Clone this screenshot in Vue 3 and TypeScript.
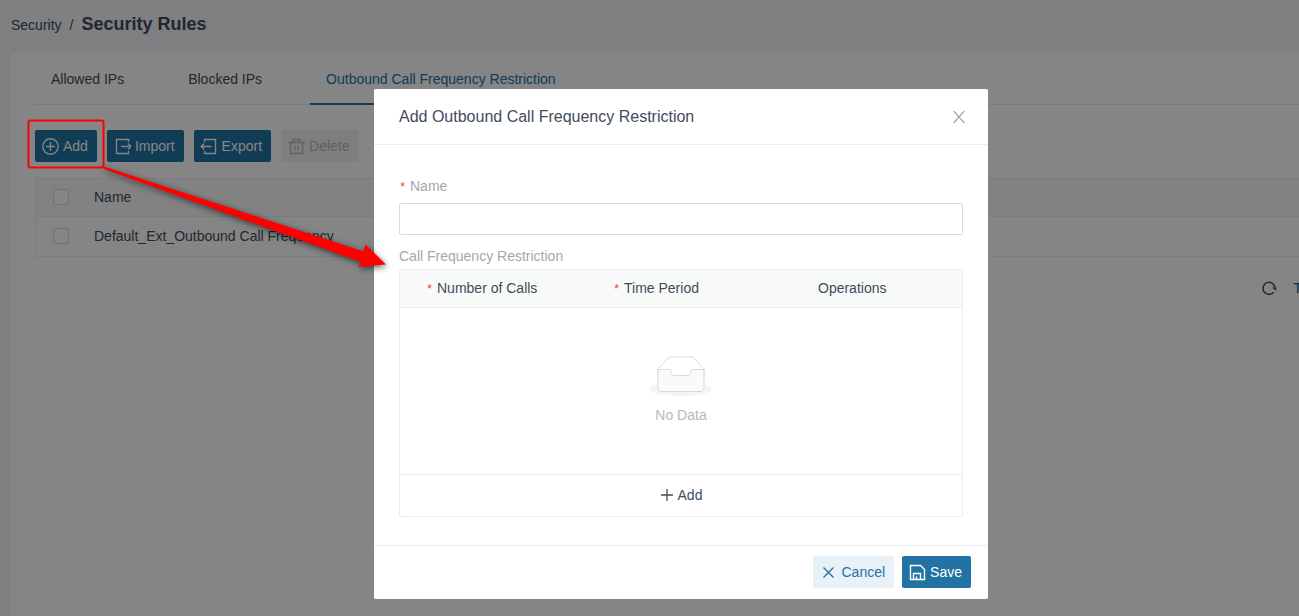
<script setup lang="ts">
import { ref } from 'vue'

interface Tab {
  id: string
  label: string
}

const tabs: Tab[] = [
  { id: 'allowed', label: 'Allowed IPs' },
  { id: 'blocked', label: 'Blocked IPs' },
  { id: 'outbound', label: 'Outbound Call Frequency Restriction' },
]
const activeTab = ref('outbound')
const rules = ref<string[]>(['Default_Ext_Outbound Call Frequency'])
const name = ref('')
</script>

<template>
  <div class="viewport">
    <div class="page">
      <nav class="breadcrumb" aria-label="Breadcrumb">
        <a href="#">Security</a>
        <span class="slash">/</span>
        <h1>Security Rules</h1>
      </nav>

      <main class="panel">
        <div class="tabs" role="tablist">
          <button
            v-for="tab in tabs"
            :key="tab.id"
            type="button"
            role="tab"
            class="tab"
            :class="{ active: tab.id === activeTab }"
            :aria-selected="tab.id === activeTab"
            @click="activeTab = tab.id"
          >{{ tab.label }}</button>
        </div>

        <div class="toolbar">
          <button type="button" class="btn primary">
            <svg viewBox="0 0 18 18"><circle cx="9.500" cy="9.500" r="7.700" /><path d="M9.500 5v9M5 9.500h9" /></svg>
            <span>Add</span>
          </button>
          <button type="button" class="btn primary">
            <svg viewBox="0 0 18 18"><path d="M15.500 5V2.500h-12v14h12V14M8 9.500h10M15 6.500l3 3-3 3" /></svg>
            <span>Import</span>
          </button>
          <button type="button" class="btn primary">
            <svg viewBox="0 0 18 18"><path d="M4.500 5V2.500h11v14h-11V14M11.500 9.500H1.200M4.200 6.500l-3 3 3 3" /></svg>
            <span>Export</span>
          </button>
          <button type="button" class="btn disabled" disabled>
            <svg viewBox="0 0 18 18"><path d="M1.200 5.500h16.300M6 5V2.500h6.500V5M3.500 5.500v11h12v-11M7.800 9v4.500M11 9v4.500" /></svg>
            <span>Delete</span>
          </button>
        </div>

        <table class="rules">
          <thead>
            <tr>
              <th class="check"><input type="checkbox" aria-label="Select all" /></th>
              <th>Name</th>
            </tr>
          </thead>
          <tbody>
            <tr v-for="rule in rules" :key="rule">
              <td class="check"><input type="checkbox" :aria-label="rule" /></td>
              <td>{{ rule }}</td>
            </tr>
          </tbody>
        </table>

        <div class="pagination">
          <button type="button" class="refresh" aria-label="Refresh">
            <svg viewBox="0 0 16 16"><path d="M12.600 12.200A6 6 0 1 1 14 8v1" /><path class="tip" d="M10.800 7.600h4.400v3.200z" /></svg>
          </button>
          <span>Total:</span>
        </div>
      </main>

      <div class="mask">
        <section class="modal" role="dialog" aria-labelledby="dialog-title">
          <header>
            <h2 id="dialog-title">Add Outbound Call Frequency Restriction</h2>
            <button type="button" class="close" aria-label="Close">
              <svg viewBox="0 0 14 14"><path d="M1.600 1 12.400 13M12.400 1 1.600 13" /></svg>
            </button>
          </header>

          <div class="body">
            <label for="rule-name"><span class="star">*</span>Name</label>
            <input id="rule-name" v-model="name" type="text" />
            <p class="caption">Call Frequency Restriction</p>
            <div class="grid">
              <table class="limits">
                <thead>
                  <tr>
                    <th class="calls"><span class="star">*</span>Number of Calls</th>
                    <th class="period"><span class="star">*</span>Time Period</th>
                    <th>Operations</th>
                  </tr>
                </thead>
                <tbody>
                  <tr>
                    <td colspan="3">
                      <div class="empty">
                        <svg viewBox="0 0 64 41">
                          <ellipse cx="32" cy="33" rx="31" ry="7" fill="#f5f5f5" />
                          <g stroke="#d9d9d9" transform="translate(0 .5)">
                            <path d="M55 12.800 44.900 1.300C44.400.8 43.700.4 42.900.4H21.100c-.8 0-1.500.4-2 .9L9 12.800V22h46z" fill="#fff" />
                            <path d="M41.600 16c0-1.700 1-3 2.300-3H55v18.200c0 2.100-1.300 3.800-3 3.800H12c-1.700 0-3-1.700-3-3.800V13h11.100c1.300 0 2.300 1.300 2.300 3 0 1.700 1.100 3 2.300 3h14.600c1.200 0 2.300-1.400 2.300-3z" fill="#fafafa" />
                          </g>
                        </svg>
                        <span>No Data</span>
                      </div>
                    </td>
                  </tr>
                </tbody>
              </table>
              <button type="button" class="add-row">
                <svg viewBox="0 0 14 14"><path d="M7 1v12M1 7h12" /></svg>
                <span>Add</span>
              </button>
            </div>
          </div>

          <footer>
            <button type="button" class="btn secondary">
              <svg viewBox="0 0 18 18"><path d="M4.500 4.500l10 10M14.500 4.500l-10 10" /></svg>
              <span>Cancel</span>
            </button>
            <button type="button" class="btn primary">
              <svg viewBox="0 0 18 18"><path d="M2.500 2.500h10l4 4v10h-14zM5.500 16.500v-6h7v6M8.500 13.500v3" /></svg>
              <span>Save</span>
            </button>
          </footer>
        </section>
      </div>

      <svg class="callout" viewBox="0 0 400 280" aria-hidden="true">
        <rect x="28.500" y="120.500" width="75" height="47" rx="2" />
        <path d="M104 166.500 363.500 251.500 365.500 244.500 386 264.500 358 267 361.500 262 104 169z" />
      </svg>
    </div>
  </div>
</template>

<style>
body {
  margin: 0;
}
</style>

<style scoped>
* {
  box-sizing: border-box;
}
.viewport {
  overflow: hidden;
  font: 14px/22px "Liberation Sans", Arial, sans-serif;
  color: #414c5c;
}
.page {
  position: relative;
  display: flex;
  flex-direction: column;
  width: calc(100% + 63px);
  min-height: 100vh;
  padding: 0 11px;
  background: #f3f5f8;
}
button {
  font: inherit;
  color: inherit;
  border: 0;
  padding: 0;
  background: none;
  cursor: pointer;
}
svg {
  display: block;
  flex: none;
  fill: none;
  stroke: currentColor;
}
h1,
h2,
p {
  margin: 0;
}
.breadcrumb {
  display: flex;
  align-items: baseline;
  height: 53px;
  padding-top: 12px;
}
.breadcrumb a {
  color: inherit;
  text-decoration: none;
}
.slash {
  margin: 0 8px;
}
h1 {
  font-size: 18px;
  line-height: 24px;
}
.panel {
  flex: 1;
  padding: 0 24px;
  background: #fff;
  border-radius: 4px 4px 0 0;
}
.tabs {
  display: flex;
  gap: 32px;
  height: 52px;
  border-bottom: 1px solid #e8eaec;
}
.tab {
  height: 52px;
  padding: 2px 16px 0;
  border-bottom: 2px solid transparent;
}
.tab.active {
  color: #2273a3;
  border-color: #2273a3;
}
.toolbar {
  display: flex;
  gap: 10px;
  margin: 25px 0 16px;
}
.btn {
  display: flex;
  align-items: center;
  gap: 4px;
  height: 32px;
  padding: 0 9px 0 6px;
  border-radius: 2px;
}
.btn svg {
  width: 18px;
  height: 18px;
  stroke-width: 1.4;
}
.primary {
  color: #fff;
  background: #2273a3;
}
.secondary {
  color: #2273a3;
  background: #e8f1f7;
}
.disabled {
  color: #b5b9c0;
  background: #f0f1f2;
}
table {
  width: 100%;
  border-spacing: 0;
}
th,
td {
  padding: 0;
  text-align: left;
  font-weight: 400;
}
.rules {
  border: 1px solid #ebeef0;
  border-bottom: 0;
}
.rules th,
.rules td {
  height: 40px;
  padding-bottom: 2px;
  border-bottom: 1px solid #ebeef0;
}
.rules th {
  height: 38px;
  background: #f9fafa;
}
.rules .check {
  width: 58px;
  padding-left: 17px;
}
.rules input {
  display: block;
  appearance: none;
  width: 16px;
  height: 16px;
  margin: 0;
  border: 1px solid #d9dbde;
  border-radius: 2px;
  background: #fff;
}
.pagination {
  display: flex;
  justify-content: flex-end;
  align-items: center;
  gap: 17px;
  margin-top: 20px;
}
.refresh svg {
  width: 16px;
  height: 16px;
  stroke-width: 1.5;
}
.refresh .tip {
  fill: currentColor;
  stroke: none;
}
.mask {
  position: absolute;
  inset: 0;
  display: flex;
  justify-content: center;
  align-items: flex-start;
  padding-top: 89px;
  background: rgba(0, 0, 0, 0.48);
}
.modal {
  width: 614px;
  background: #fff;
  border-radius: 2px;
}
header {
  display: flex;
  justify-content: space-between;
  align-items: center;
  height: 56px;
  padding: 0 22px 0 25px;
  border-bottom: 1px solid #ebeef0;
}
h2 {
  font-size: 16px;
  line-height: 24px;
  font-weight: 400;
}
.close {
  color: #a3a9b1;
}
.close svg {
  width: 14px;
  height: 14px;
  stroke-width: 1.2;
}
.body {
  padding: 30px 25px 28px;
}
label,
.caption {
  display: block;
  color: #a3a7af;
}
.star {
  display: inline-block;
  width: 11px;
  font: 12px/16px "Liberation Mono", monospace;
  color: #e8452c;
}
.body input {
  display: block;
  width: 100%;
  height: 32px;
  margin: 6px 0 10px;
  padding: 0 11px;
  font: inherit;
  color: inherit;
  border: 1px solid #d9dbde;
  border-radius: 2px;
  background: #fff;
}
.caption {
  margin-bottom: 2px;
}
.grid {
  border: 1px solid #ebeef0;
  border-radius: 2px;
}
.limits {
  table-layout: fixed;
}
.limits th {
  height: 38px;
  padding: 0 0 2px 26px;
  background: #f8faf9;
  border-bottom: 1px solid #ebeef0;
}
.limits .calls {
  width: 187px;
}
.limits .period {
  width: 205px;
}
.empty {
  display: flex;
  flex-direction: column;
  align-items: center;
  gap: 7px;
  padding: 48px 0;
  color: #b5b9c0;
}
.empty svg {
  width: 64px;
  height: 41px;
}
.empty ellipse {
  stroke: none;
}
.add-row {
  display: flex;
  justify-content: center;
  align-items: center;
  gap: 4px;
  width: 100%;
  height: 42px;
  padding-bottom: 2px;
  border-top: 1px solid #ebeef0;
}
.add-row svg {
  width: 14px;
  height: 14px;
  stroke-width: 1.3;
}
footer {
  display: flex;
  justify-content: flex-end;
  gap: 8px;
  padding: 10px 17px 11px;
  border-top: 1px solid #ebeef0;
}
.callout {
  position: absolute;
  top: 0;
  left: 0;
  width: 400px;
  height: 280px;
  pointer-events: none;
}
.callout rect {
  stroke: #f00;
  stroke-width: 2;
}
.callout path {
  fill: #f00;
  stroke: none;
  filter: drop-shadow(1px 2px 3px rgba(0, 0, 0, 0.6));
}
</style>
